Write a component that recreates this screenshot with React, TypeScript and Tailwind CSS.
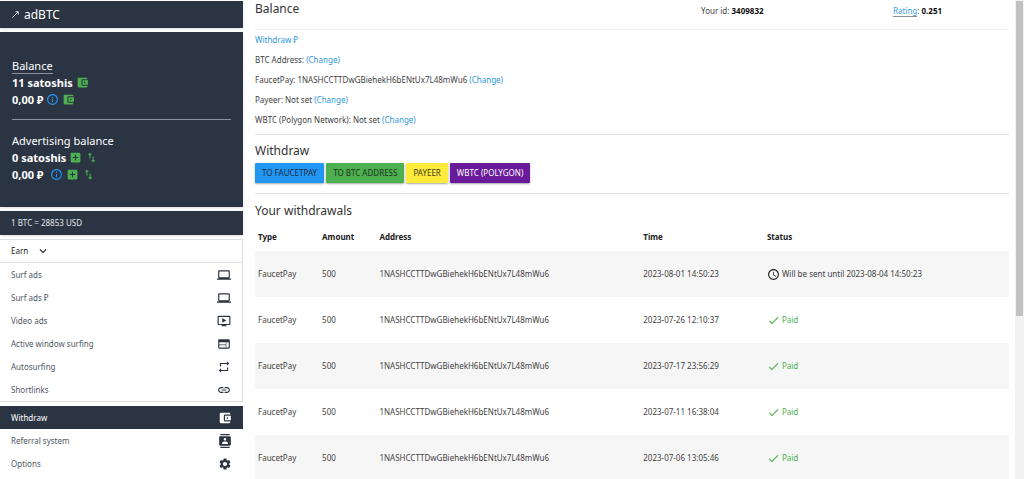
import clsx from "clsx";
import { ReactNode } from "react";
import {
  MdAccessTime,
  MdAccountBalanceWallet,
  MdAddBox,
  MdContacts,
  MdDone,
  MdInfoOutline,
  MdKeyboardArrowDown,
  MdLaptop,
  MdLink,
  MdOndemandVideo,
  MdRepeat,
  MdSettings,
  MdSwapVert,
  MdWeb,
} from "react-icons/md";

const earnLinks = [
  { label: "Surf ads", icon: MdLaptop },
  { label: "Surf ads ₽", icon: MdLaptop },
  { label: "Video ads", icon: MdOndemandVideo },
  { label: "Active window surfing", icon: MdWeb },
  { label: "Autosurfing", icon: MdRepeat },
  { label: "Shortlinks", icon: MdLink },
];

const accountLinks = [
  { label: "Withdraw", icon: MdAccountBalanceWallet, active: true },
  { label: "Referral system", icon: MdContacts },
  { label: "Options", icon: MdSettings },
];

const wallets = [
  { label: "BTC Address:" },
  { label: "FaucetPay: 1NASHCCTTDwGBiehekH6bENtUx7L48mWu6" },
  { label: "Payeer: Not set" },
  { label: "WBTC (Polygon Network): Not set" },
];

const methods = [
  { label: "TO FAUCETPAY", className: "bg-[#2196f3] text-[#1d2b3a]" },
  { label: "TO BTC ADDRESS", className: "bg-[#4caf50] text-[#1d3320]" },
  { label: "PAYEER", className: "bg-[#ffeb3b] text-[#3a3720]" },
  { label: "WBTC (POLYGON)", className: "bg-[#6a1b9a] text-white" },
];

const withdrawals = [
  { time: "2023-08-01 14:50:23", pendingUntil: "2023-08-04 14:50:23" },
  { time: "2023-07-26 12:10:37" },
  { time: "2023-07-17 23:56:29" },
  { time: "2023-07-11 16:38:04" },
  { time: "2023-07-06 13:05:46" },
];

function NavItem({ label, icon: Icon, active }: { label: string; icon: typeof MdLink; active?: boolean }) {
  return (
    <li>
      <a
        href="#"
        className={clsx(
          "flex h-[23px] items-center justify-between px-[11px]",
          active ? "bg-[#2b3443] text-white" : "text-[#505863]",
        )}
      >
        {label}
        <Icon className={clsx("size-[14px]", active ? "text-white" : "text-[#2b3443]")} />
      </a>
    </li>
  );
}

function IconLink({ label, className, children }: { label: string; className: string; children: ReactNode }) {
  return (
    <a href="#" aria-label={label} className={className}>
      {children}
    </a>
  );
}

function Sidebar() {
  return (
    <aside className="flex w-[243px] shrink-0 flex-col gap-1 pt-px">
      <a href="#" className="flex h-[27px] items-center gap-1 bg-[#2b3443] pl-[11px] text-[12px] text-white shadow-sm">
        <svg viewBox="0 0 10 10" className="size-[9px]" fill="none" stroke="currentColor">
          <path d="M1.5 8.5 8 2M5 2h3v3" />
        </svg>
        adBTC
      </a>

      <section className="h-[175px] bg-[#2b3443] px-3 pt-[25px] text-[11px] leading-[17px] text-white shadow-sm">
        <h2>
          <span className="border-b border-[#8b929c]">Balance</span>
        </h2>
        <p className="flex items-center gap-[3px] font-bold">
          11 satoshis
          <IconLink label="Withdraw satoshis" className="text-[#4caf50]">
            <MdAccountBalanceWallet className="size-[13px]" />
          </IconLink>
        </p>
        <p className="flex items-center gap-[3px] font-bold">
          0,00 ₽
          <IconLink label="About rubles" className="text-[#2196f3]">
            <MdInfoOutline className="size-[13px]" />
          </IconLink>
          <IconLink label="Withdraw rubles" className="text-[#4caf50]">
            <MdAccountBalanceWallet className="size-[13px]" />
          </IconLink>
        </p>
        <hr className="mt-[11px] mb-3 border-[#8b929c]" />
        <h2>Advertising balance</h2>
        <p className="flex items-center gap-[3px] font-bold">
          0 satoshis
          <IconLink label="Add satoshis" className="text-[#4caf50]">
            <MdAddBox className="size-[13px]" />
          </IconLink>
          <IconLink label="Exchange satoshis" className="text-[#4caf50]">
            <MdSwapVert className="size-[13px]" />
          </IconLink>
        </p>
        <p className="flex items-center gap-[3px] font-bold">
          <span className="mr-1">0,00 ₽</span>
          <IconLink label="About advertising rubles" className="text-[#2196f3]">
            <MdInfoOutline className="size-[13px]" />
          </IconLink>
          <IconLink label="Add rubles" className="text-[#4caf50]">
            <MdAddBox className="size-[13px]" />
          </IconLink>
          <IconLink label="Exchange rubles" className="text-[#4caf50]">
            <MdSwapVert className="size-[13px]" />
          </IconLink>
        </p>
      </section>

      <p className="flex h-6 items-center bg-[#2b3443] pl-[11px] text-[#e3e6ea] shadow-sm">1 BTC = 28853 USD</p>

      <nav className="flex flex-col gap-1">
        <div className="border border-l-0 border-[#dcdcdc]">
          <button
            type="button"
            className="flex h-[23px] w-full items-center gap-2 border-b border-[#e0e0e0] pl-[11px] text-[#212121]"
          >
            Earn
            <MdKeyboardArrowDown className="size-[14px]" />
          </button>
          <ul>
            {earnLinks.map((link) => (
              <NavItem key={link.label} {...link} />
            ))}
          </ul>
        </div>
        <ul>
          {accountLinks.map((link) => (
            <NavItem key={link.label} {...link} />
          ))}
        </ul>
      </nav>
    </aside>
  );
}

function Status({ pendingUntil }: { pendingUntil?: string }) {
  if (pendingUntil) {
    return (
      <span className="flex items-center gap-0.5">
        <MdAccessTime className="size-[13px] text-[#212121]" />
        Will be sent until {pendingUntil}
      </span>
    );
  }
  return (
    <span className="flex items-center gap-0.5 text-[#4caf50]">
      <MdDone className="size-[13px]" />
      Paid
    </span>
  );
}

function WithdrawalsTable() {
  return (
    <table className="w-full table-fixed text-left">
      <thead className="text-[#212121]">
        <tr className="h-7">
          <th className="w-[8.5%] pl-[3px]">Type</th>
          <th className="w-[7.6%] pl-[3px]">Amount</th>
          <th className="w-[35%] pl-[3px]">Address</th>
          <th className="w-[16.4%] pl-[3px]">Time</th>
          <th className="pl-[3px]">Status</th>
        </tr>
      </thead>
      <tbody>
        {withdrawals.map((row) => (
          <tr key={row.time} className="h-[46px] odd:bg-[#f6f6f6]">
            <td className="pl-[3px]">FaucetPay</td>
            <td className="pl-[3px]">500</td>
            <td className="pl-[3px]">1NASHCCTTDwGBiehekH6bENtUx7L48mWu6</td>
            <td className="pl-[3px]">{row.time}</td>
            <td className="pl-[3px]">
              <Status pendingUntil={row.pendingUntil} />
            </td>
          </tr>
        ))}
      </tbody>
    </table>
  );
}

export default function App() {
  return (
    <div className="flex h-screen overflow-hidden bg-white font-['Noto_Sans',sans-serif] text-[8px] leading-3 text-[#424242]">
      <Sidebar />

      <main className="min-w-0 flex-1 pr-1.5 pl-3">
        <header className="flex h-[30px] border-b border-[#eeeeee]">
          <h1 className="flex-1 text-[12px] leading-[18px] text-[#333333]">Balance</h1>
          <p className="w-[192px] pt-[5px]">
            Your id: <b className="text-[#111111]">3409832</b>
          </p>
          <p className="w-[116px] pt-[5px]">
            <a href="#" className="border-b border-[#8b929c] text-[#3a9fe0]">
              Rating
            </a>
            : <b className="text-[#111111]">0.251</b>
          </p>
        </header>

        <section className="flex flex-col gap-2 border-b border-[#e0e0e0] pt-1 pb-2">
          <a href="#" className="self-start text-[#2d98da]">
            Withdraw ₽
          </a>
          {wallets.map((wallet) => (
            <p key={wallet.label}>
              {wallet.label}{" "}
              <a href="#" className="text-[#2d98da]">
                (Change)
              </a>
            </p>
          ))}
        </section>

        <section className="border-b border-[#e0e0e0] pt-1.5 pb-2.5">
          <h2 className="mb-0.5 text-[12px] leading-5 text-[#333333]">Withdraw</h2>
          <div className="flex gap-0.5">
            {methods.map((method) => (
              <button
                key={method.label}
                type="button"
                className={clsx("h-5 rounded-[1px] px-[7px] shadow-[0_1px_2px_rgba(0,0,0,0.35)]", method.className)}
              >
                {method.label}
              </button>
            ))}
          </div>
        </section>

        <section className="pt-[7px]">
          <h2 className="mb-0.5 text-[12px] leading-5 text-[#333333]">Your withdrawals</h2>
          <WithdrawalsTable />
        </section>
      </main>

      <div className="w-[9px] shrink-0 bg-[#f1f1f1] px-px pt-px">
        <div className="h-[66%] bg-[#c1c1c1]" />
      </div>
    </div>
  );
}
